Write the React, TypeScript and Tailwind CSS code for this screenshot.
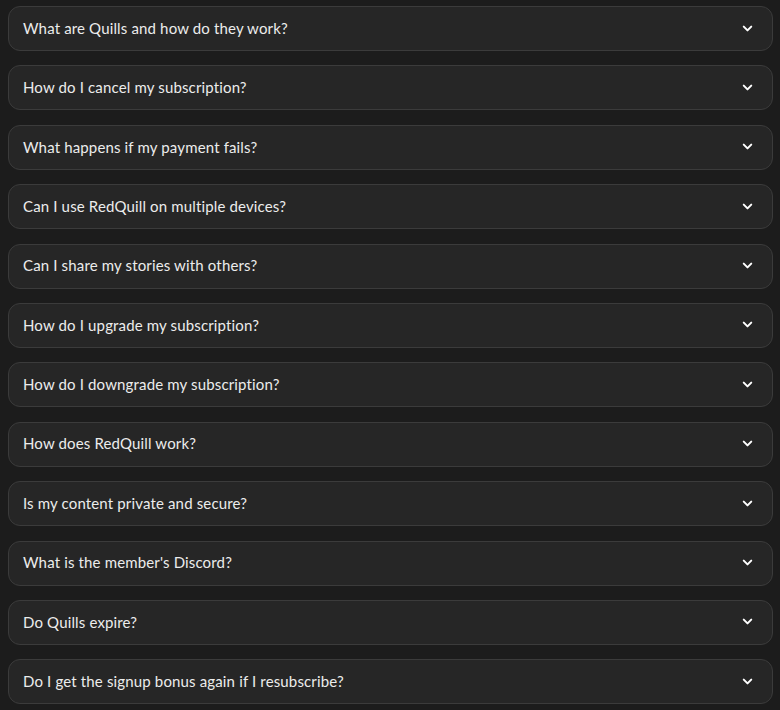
import React, { useState } from 'react';
import { ChevronDown } from 'lucide-react';

const questions = [
  'What are Quills and how do they work?',
  'How do I cancel my subscription?',
  'What happens if my payment fails?',
  'Can I use RedQuill on multiple devices?',
  'Can I share my stories with others?',
  'How do I upgrade my subscription?',
  'How do I downgrade my subscription?',
  'How does RedQuill work?',
  'Is my content private and secure?',
  "What is the member's Discord?",
  'Do Quills expire?',
  'Do I get the signup bonus again if I resubscribe?',
];

export default function App() {
  const [open, setOpen] = useState<number | null>(null);

  return (
    <div
      className="min-h-screen w-full bg-[#1c1c1c] px-2 pt-[6px]"
      style={{ fontFamily: 'Lato, "Open Sans", sans-serif' }}
    >
      <div className="flex flex-col gap-[14.4px]">
        {questions.map((q, i) => (
          <div
            key={q}
            className="w-[765px] rounded-xl border border-[#3b3b3b] bg-[#262626]"
          >
            <button
              onClick={() => setOpen(open === i ? null : i)}
              className="flex h-[43px] w-full items-center justify-between pb-[1px] pl-[14px] pr-[17px] text-left"
            >
              <span className="text-[15px] tracking-[0.15px] text-[#ececec]">{q}</span>
              <ChevronDown
                className={`h-[15px] w-[15px] text-white transition-transform ${open === i ? 'rotate-180' : ''}`}
                strokeWidth={3.2}
              />
            </button>
          </div>
        ))}
      </div>
    </div>
  );
}
